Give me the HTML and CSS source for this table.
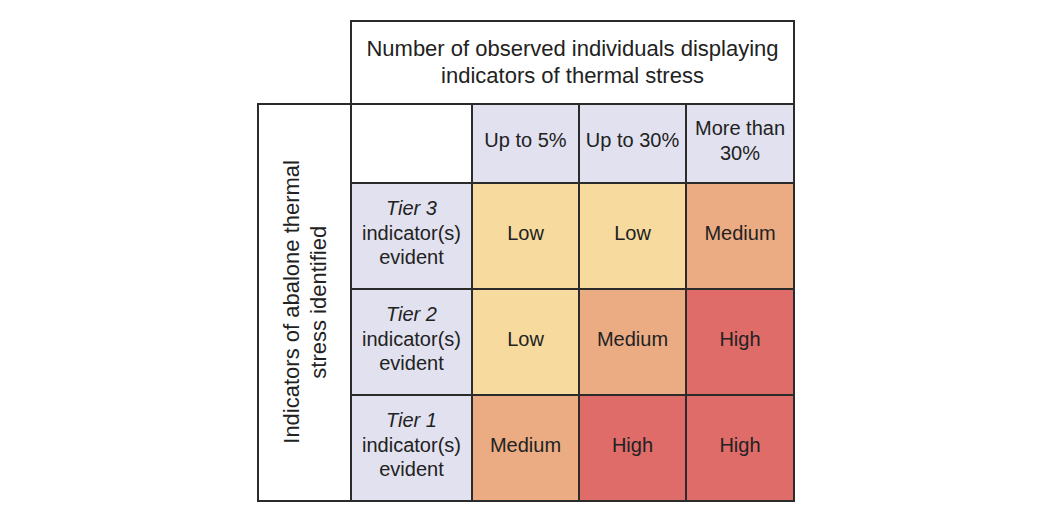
FILE: index.html
```html
<!DOCTYPE html>
<html>
<head>
<meta charset="utf-8">
<link rel="stylesheet" href="styles.css">
</head>
<body>
<div class="page">
<table class="matrix">
  <colgroup>
    <col class="c-axis">
    <col class="c-label">
    <col class="c-val">
    <col class="c-val">
    <col class="c-val-last">
  </colgroup>
  <tr class="r-title">
    <td class="corner"></td>
    <td class="title" colspan="4">Number of observed individuals displaying<br>indicators of thermal stress</td>
  </tr>
  <tr class="r-head">
    <td class="axis" rowspan="4"><div class="axis-text">Indicators of abalone thermal<br>stress identified</div></td>
    <td class="blank"></td>
    <td class="head">Up to 5%</td>
    <td class="head">Up to 30%</td>
    <td class="head">More than<br>30%</td>
  </tr>
  <tr class="r-body">
    <td class="tier"><em>Tier 3</em><br>indicator(s)<br>evident</td>
    <td class="low">Low</td>
    <td class="low">Low</td>
    <td class="med">Medium</td>
  </tr>
  <tr class="r-body">
    <td class="tier"><em>Tier 2</em><br>indicator(s)<br>evident</td>
    <td class="low">Low</td>
    <td class="med">Medium</td>
    <td class="high">High</td>
  </tr>
  <tr class="r-body">
    <td class="tier"><em>Tier 1</em><br>indicator(s)<br>evident</td>
    <td class="med">Medium</td>
    <td class="high">High</td>
    <td class="high">High</td>
  </tr>
</table>
</div>
</body>
</html>
```
FILE: styles.css
```css
html, body {
  margin: 0;
  padding: 0;
  background: #ffffff;
}
.page {
  padding: 20px 0 0 257px;
}
.matrix {
  border-collapse: collapse;
  table-layout: fixed;
  width: 536px;
  font-family: "Liberation Sans", Arial, sans-serif;
  color: #222222;
  font-size: 20px;
  line-height: 24.5px;
}
.c-axis { width: 93px; }
.c-label { width: 121px; }
.c-val { width: 107px; }
.c-val-last { width: 108px; }
.matrix td {
  border: 2px solid #2b2b2b;
  padding: 0 0 6px 0;
  text-align: center;
  vertical-align: middle;
}
.matrix td.corner {
  border: none;
}
.matrix td.title,
.matrix td.axis {
  padding: 0 0 2px 0;
}
.r-title { height: 83px; }
.r-head { height: 79px; }
.r-body { height: 106px; }
.title {
  font-size: 22px;
  line-height: 27px;
  background: #ffffff;
}
.axis {
  background: #ffffff;
}
.axis-text {
  writing-mode: vertical-rl;
  transform: rotate(180deg);
  font-size: 22px;
  line-height: 27px;
  text-align: center;
  margin: 0 auto;
}
.blank { background: #ffffff; }
.head, .tier { background: #e1e1ef; }
.tier em { font-style: italic; }
.low { background: #f7da9d; }
.med { background: #ebac84; }
.high { background: #df6c69; }
```
